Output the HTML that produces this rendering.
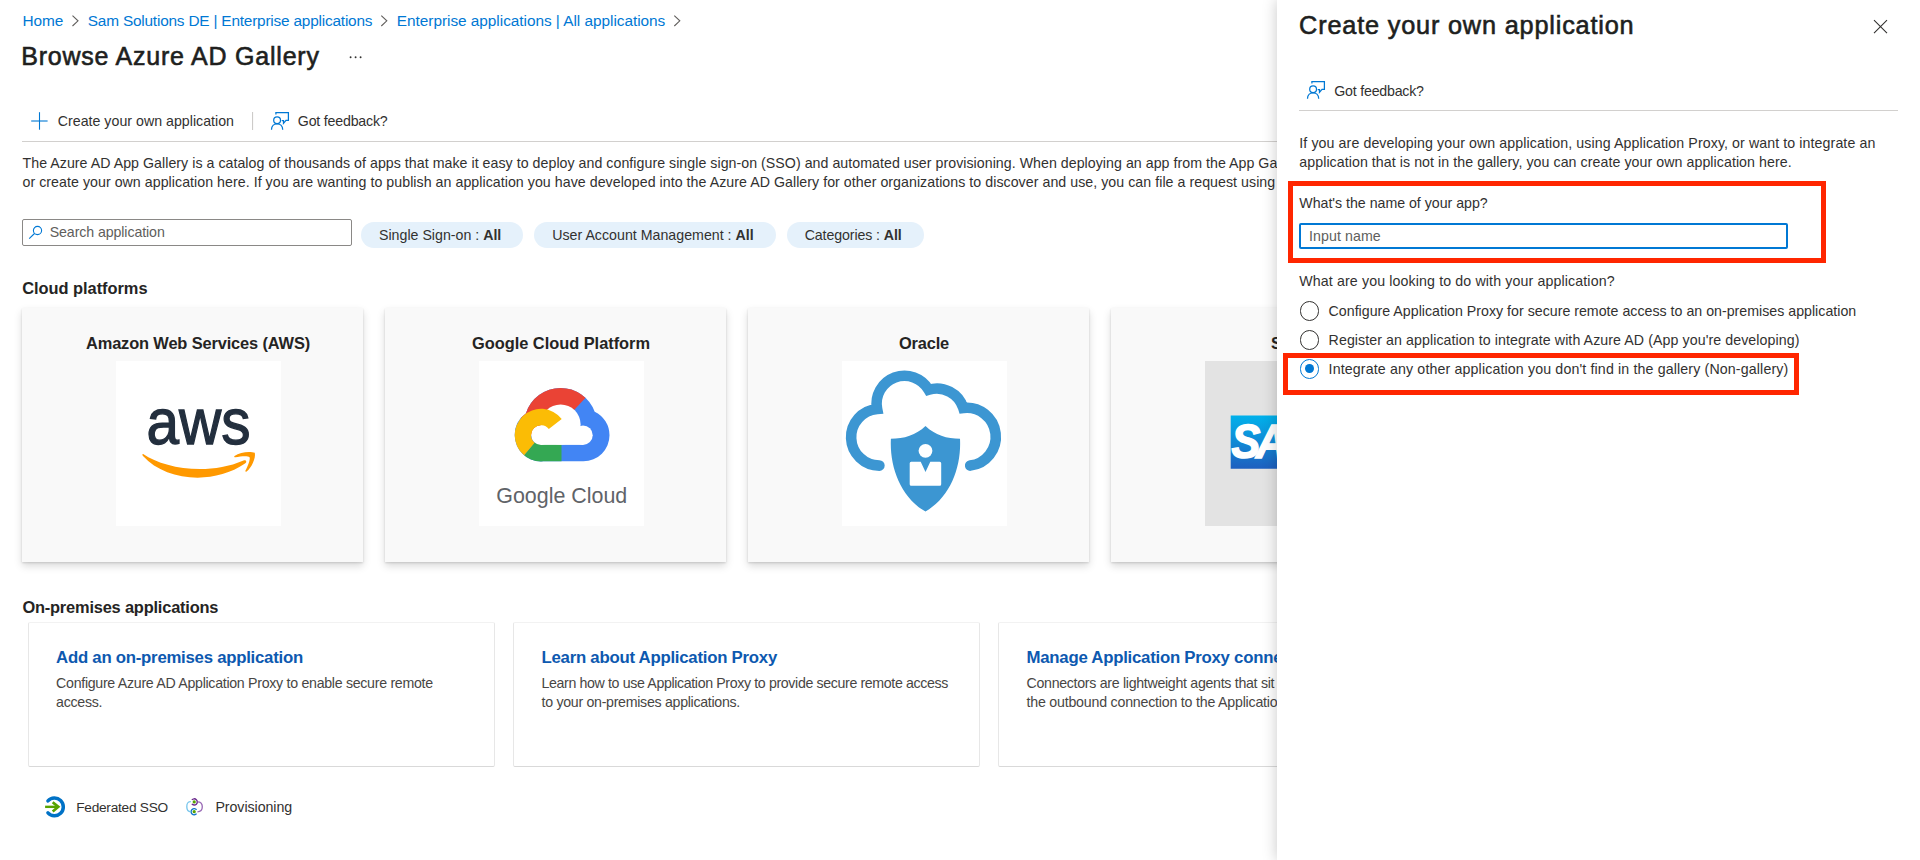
<!DOCTYPE html>
<html lang="en">
<head>
<meta charset="utf-8">
<title>Browse Azure AD Gallery</title>
<style>
html,body{margin:0;padding:0;}
body{width:1920px;height:860px;overflow:hidden;background:#fff;position:relative;font-family:"Liberation Sans",sans-serif;color:#323130;}
.t{position:absolute;white-space:nowrap;line-height:40px;height:40px;font-family:"Liberation Sans",sans-serif;}
.t b{font-weight:700;}
.abs{position:absolute;}
#main{position:absolute;left:0;top:0;width:1277px;height:860px;overflow:hidden;}
#panel{position:absolute;left:1277px;top:0;width:643px;height:860px;background:#fff;box-shadow:0 0 14px rgba(0,0,0,.22);}
#panel .t,#panel .abs{margin-left:-1277px;}
.hr{position:absolute;height:1px;background:#d2d0ce;}
.pill{position:absolute;height:26px;border-radius:13px;background:#e5f1fb;}
.card{position:absolute;top:308px;width:341px;height:254px;background:#f9f9f9;box-shadow:0 3.5px 7.9px rgba(0,0,0,.15),0 .7px 2px rgba(0,0,0,.13);}
.tile{position:absolute;left:94px;top:53px;width:165px;height:165px;background:#fff;overflow:hidden;}
.ocard{position:absolute;top:622px;width:465px;height:143px;background:#fff;border:1px solid #e7e7e7;border-top-color:#f2f2f2;border-bottom-color:#d9d9d9;border-radius:2px;}
.red{position:absolute;border:5.3px solid #ff2600;box-sizing:border-box;}
.radio{position:absolute;width:17.5px;height:17.5px;border:1px solid #323130;border-radius:50%;background:#fff;}
</style>
</head>
<body>
<div id="main">
<!-- breadcrumb chevrons -->
<svg class="abs" style="left:0;top:0" width="700" height="40" fill="none" stroke="#605e5c" stroke-width="1.1">
<path d="M72.5 15.6 L78 20.8 L72.5 26"/>
<path d="M381.3 15.6 L386.8 20.8 L381.3 26"/>
<path d="M674.3 15.6 L679.8 20.8 L674.3 26"/>
</svg>
<!-- ellipsis -->
<svg class="abs" style="left:345px;top:50px" width="24" height="14"><g fill="#323130"><circle cx="5.6" cy="7.3" r="0.95"/><circle cx="10.6" cy="7.3" r="0.95"/><circle cx="15.6" cy="7.3" r="0.95"/></g></svg>
<!-- toolbar icons -->
<svg class="abs" style="left:28px;top:108px" width="270" height="26" fill="none" stroke="#0078d4">
<path d="M11.5 4.2 V21.7" stroke-width="1.1"/>
<path d="M3.2 13 H19.6" stroke-width="1.1"/>
<path d="M224.6 4 V22" stroke="#c8c6c4" stroke-width="1"/>
<g stroke-width="1.25" transform="translate(243,4)">
<path d="M4.9 2.6 V0.6 H17.4 V8.3 H15 L12.5 11.3 V8.5 H10.7"/>
<circle cx="6.1" cy="8.2" r="3.4"/>
<path d="M0.5 17.8 C0.5 9.8, 11.7 9.8, 11.7 17.8"/>
</g>
</svg>
<div class="hr" style="left:22px;top:141px;width:1300px"></div>
<!-- search -->
<div class="abs" style="left:22px;top:219px;width:328px;height:25px;border:1px solid #8a8886;border-radius:2px;background:#fff"></div>
<svg class="abs" style="left:26px;top:222px" width="20" height="20" fill="none" stroke="#0078d4" stroke-width="1.1"><circle cx="11.5" cy="8.5" r="4.1"/><path d="M8.5 11.5 L3.2 16.7"/></svg>
<!-- pills -->
<div class="pill" style="left:361px;top:222px;width:162px"></div>
<div class="pill" style="left:534px;top:222px;width:242px"></div>
<div class="pill" style="left:787px;top:222px;width:137px"></div>
<!-- cloud cards -->
<div class="card" style="left:22px"><div class="tile">
<svg width="165" height="165" viewBox="0 0 165 165">
<text x="30.6" y="83.2" font-family="Liberation Sans, sans-serif" font-size="64" fill="#232f3e" stroke="#232f3e" stroke-width="1.3" textLength="104" lengthAdjust="spacingAndGlyphs">aws</text>
<path fill="#ff9900" d="M27.2 93 C48 107.5, 92 115, 127.5 99.5 C130 98.5, 131.5 101, 129 102.6 C98 124, 50 120.5, 27 95 C26 93.6, 26.4 92.6, 27.2 93 Z"/>
<path fill="#ff9900" d="M118.5 95 C124 91, 134 90, 138.8 91.8 C140 97, 135.5 107, 130.6 110.6 C129.6 111.2, 129 110.4, 129.5 109.6 C132 104.5, 134.4 98.5, 133.6 96.2 C131.5 94.6, 124.5 95.4, 119.4 96.3 C118.3 96.4, 117.8 95.6, 118.5 95 Z"/>
</svg></div></div>
<div class="card" style="left:385px"><div class="tile">
<svg width="165" height="165" viewBox="0 0 165 165">
<defs><clipPath id="gco"><circle cx="62.0" cy="74.1" r="26.3"/><circle cx="81.6" cy="63.4" r="36.4"/><circle cx="104.4" cy="74.2" r="26.1"/><rect x="62.0" y="74" width="42.4" height="26.3"/></clipPath></defs>
<g clip-path="url(#gco)">
<rect x="0" y="0" width="165" height="165" fill="#4285f4"/>
<path fill="#ea4335" d="M81.6 63.4 L108.88 34.15 A40 40 0 0 0 44.01 77.08 Z"/>
<path fill="#34a853" d="M62.0 74.1 L41.43 98.61 L41.43 110 L82.5 110 L82.5 74.1 Z"/>
</g>
<g fill="#fff"><circle cx="62.0" cy="74.1" r="9.9"/><circle cx="81.6" cy="63.4" r="20"/><circle cx="104" cy="74.2" r="9.7"/><rect x="62.0" y="70" width="42" height="13.9"/></g>
<path fill="#fbbc05" d="M45.09 94.25 A26.3 26.3 0 1 1 82.72 57.91 L69.80 68.00 A9.9 9.9 0 1 0 55.64 81.68 Z"/>
<text x="17.3" y="141.8" font-family="Liberation Sans, sans-serif" font-size="22" fill="#5f6368" textLength="131" lengthAdjust="spacingAndGlyphs">Google Cloud</text>
</svg></div></div>
<div class="card" style="left:748px"><div class="tile">
<svg width="165" height="165" viewBox="0 0 165 165">
<path fill="none" stroke="#3c96d2" stroke-width="10.6" stroke-linecap="round" stroke-linejoin="miter" d="M37.4 104.6 A28.35 28.35 0 0 1 35.1 48 A27.9 27.9 0 0 1 86.7 28.8 A27.8 27.8 0 0 1 121.3 47 A29.0 29.0 0 1 1 128.2 104.6"/>
<path fill="#3c96d2" d="M83.5 64.9 C74 74, 62 77.7, 48.9 77.7 C47.5 105, 58 136, 83.5 150.6 C109 136, 119.5 105, 118 77.7 C105 77.7, 93 74, 83.5 64.9 Z"/>
<circle cx="83.5" cy="89.8" r="6.9" fill="#fff"/>
<path fill="#fff" d="M69.2 100.7 H78.7 L83.5 110.9 L88.3 100.7 H97.7 Q99.2 100.7 99.2 102.2 V123.2 Q99.2 124.7 97.7 124.7 H69.2 Q67.7 124.7 67.7 123.2 V102.2 Q67.7 100.7 69.2 100.7 Z"/>
</svg></div></div>
<div class="card" style="left:1111px"><div class="tile" style="background:#e3e3e3">
<svg width="165" height="165" viewBox="0 0 165 165">
<defs><linearGradient id="sapg" x1="0" y1="0" x2="0" y2="1"><stop offset="0" stop-color="#00b1eb"/><stop offset="0.25" stop-color="#0a9ee0"/><stop offset="1" stop-color="#1e5fbf"/></linearGradient></defs>
<path d="M25.7 54.6 H133 L80 107.7 H25.7 Z" fill="url(#sapg)"/>
<g transform="translate(26.6 0) scale(0.88 1)"><text x="0" y="97.5" font-family="Liberation Sans, sans-serif" font-size="49" font-weight="700" font-style="italic" fill="#fff" stroke="#fff" stroke-width="1.6" letter-spacing="-5">SAP</text></g>
</svg></div></div>
<!-- on-prem cards -->
<div class="ocard" style="left:28px"></div>
<div class="ocard" style="left:513px"></div>
<div class="ocard" style="left:998px"></div>
<!-- legend icons -->
<svg class="abs" style="left:40px;top:792px" width="170" height="30" fill="none">
<path d="M7.93 8.92 A8.85 8.85 0 1 1 7.93 20.88" stroke="#0072c6" stroke-width="3.5" stroke-linecap="round"/>
<path d="M5.1 14.85 H17.2" stroke="#57a300" stroke-width="2.4"/>
<path d="M12.7 10.2 L18.3 14.85 L12.7 19.5" stroke="#57a300" stroke-width="2.7"/>
<g stroke-width="1.35">
<path d="M151.83 7.91 A3.1 3.1 0 1 1 151.83 11.89" stroke="#6b2a8c"/>
<path d="M156.57 17.71 A3.1 3.1 0 1 0 156.57 21.69" stroke="#0f74c9"/>
<path d="M150.9 9.6 C147 9.6, 146.8 12, 146.8 14.8 C146.8 17.5, 147.5 19.7, 150.8 19.7" stroke="#79c6ec"/>
<path d="M157.6 9.8 C161.5 9.8, 162.3 12, 162.3 14.8 C162.3 17.5, 161.5 19.8, 157.4 19.8" stroke="#9a6bb6"/>
</g>
<circle cx="154.2" cy="9.9" r="1.6" fill="#57a300"/><circle cx="154.2" cy="19.7" r="1.6" fill="#57a300"/>
</svg>
<span id="bc1" class="t" style="left:22.50px;top:1px;font-size:15.4px;letter-spacing:-0.0406px;color:#0078d4;">Home</span>
<span id="bc2" class="t" style="left:87.80px;top:1px;font-size:15.4px;letter-spacing:-0.2061px;color:#0078d4;">Sam Solutions DE | Enterprise applications</span>
<span id="bc3" class="t" style="left:396.80px;top:1px;font-size:15.4px;letter-spacing:-0.0376px;color:#0078d4;">Enterprise applications | All applications</span>
<span id="title" class="t" style="left:21.30px;top:36px;font-size:25px;letter-spacing:0.7708px;color:#201f1e;-webkit-text-stroke:0.6px currentColor;">Browse Azure AD Gallery</span>
<span id="tb1" class="t" style="left:57.75px;top:101px;font-size:14.2px;letter-spacing:0.0139px;color:#323130;">Create your own application</span>
<span id="tb2" class="t" style="left:297.80px;top:101px;font-size:14.2px;letter-spacing:-0.1986px;color:#323130;">Got feedback?</span>
<span id="d1" class="t" style="left:22.50px;top:143px;font-size:14.2px;letter-spacing:0.0375px;color:#323130;">The Azure AD App Gallery is a catalog of thousands of apps that make it easy to deploy and configure single sign-on (SSO) and automated user provisioning. When deploying an app from the App Gallery, you leverage prebuilt templates to connect your users more securely to their apps. Browse</span>
<span id="d2" class="t" style="left:22.50px;top:162px;font-size:14.2px;letter-spacing:0.0448px;color:#323130;">or create your own application here. If you are wanting to publish an application you have developed into the Azure AD Gallery for other organizations to discover and use, you can file a request using the process described in this article.</span>
<span id="srch" class="t" style="left:49.70px;top:212px;font-size:14.2px;letter-spacing:-0.0964px;color:#605e5c;">Search application</span>
<span id="p1" class="t" style="left:379.00px;top:215px;font-size:14.2px;letter-spacing:0.0025px;color:#323130;">Single Sign-on : <b>All</b></span>
<span id="p2" class="t" style="left:552.20px;top:215px;font-size:14.2px;letter-spacing:0.0152px;color:#323130;">User Account Management : <b>All</b></span>
<span id="p3" class="t" style="left:804.70px;top:215px;font-size:14.2px;letter-spacing:-0.1049px;color:#323130;">Categories : <b>All</b></span>
<span id="h1" class="t" style="left:22.30px;top:268px;font-size:16.4px;letter-spacing:-0.0315px;color:#252423;font-weight:700;">Cloud platforms</span>
<span id="c1" class="t" style="left:86.00px;top:323px;font-size:16.4px;letter-spacing:-0.1363px;color:#252423;font-weight:700;">Amazon Web Services (AWS)</span>
<span id="c2" class="t" style="left:472.00px;top:323px;font-size:16.4px;letter-spacing:-0.0231px;color:#252423;font-weight:700;">Google Cloud Platform</span>
<span id="c3" class="t" style="left:899.00px;top:323px;font-size:16.4px;letter-spacing:-0.1719px;color:#252423;font-weight:700;">Oracle</span>
<span id="c4" class="t" style="left:1271.00px;top:323px;font-size:16.4px;letter-spacing:-0.5677px;color:#252423;font-weight:700;">SAP</span>
<span id="h2" class="t" style="left:22.40px;top:587px;font-size:16.4px;letter-spacing:-0.1871px;color:#252423;font-weight:700;">On-premises applications</span>
<span id="o1t" class="t" style="left:56.10px;top:638px;font-size:16.8px;letter-spacing:-0.2588px;color:#0d59b0;font-weight:700;">Add an on-premises application</span>
<span id="o1a" class="t" style="left:56.10px;top:663px;font-size:14.2px;letter-spacing:-0.2938px;color:#484644;">Configure Azure AD Application Proxy to enable secure remote</span>
<span id="o1b" class="t" style="left:56.10px;top:682px;font-size:14.2px;letter-spacing:-0.2938px;color:#484644;">access.</span>
<span id="o2t" class="t" style="left:541.50px;top:638px;font-size:16.8px;letter-spacing:-0.2500px;color:#0d59b0;font-weight:700;">Learn about Application Proxy</span>
<span id="o2a" class="t" style="left:541.50px;top:663px;font-size:14.2px;letter-spacing:-0.3651px;color:#484644;">Learn how to use Application Proxy to provide secure remote access</span>
<span id="o2b" class="t" style="left:541.50px;top:682px;font-size:14.2px;letter-spacing:-0.2936px;color:#484644;">to your on-premises applications.</span>
<span id="o3t" class="t" style="left:1026.50px;top:638px;font-size:16.8px;letter-spacing:-0.2500px;color:#0d59b0;font-weight:700;">Manage Application Proxy connectors</span>
<span id="o3a" class="t" style="left:1026.50px;top:663px;font-size:14.2px;letter-spacing:-0.2992px;color:#484644;">Connectors are lightweight agents that sit on-premises and facilitate</span>
<span id="o3b" class="t" style="left:1026.50px;top:682px;font-size:14.2px;letter-spacing:-0.2085px;color:#484644;">the outbound connection to the Application Proxy service.</span>
<span id="l1" class="t" style="left:76.20px;top:788px;font-size:13.7px;letter-spacing:-0.2546px;color:#323130;">Federated SSO</span>
<span id="l2" class="t" style="left:215.40px;top:787px;font-size:14.2px;letter-spacing:-0.0414px;color:#323130;">Provisioning</span>
</div>
<div id="panel">
<svg class="abs" style="left:1870px;top:16px" width="22" height="22" stroke="#323130" stroke-width="1.1" fill="none"><path d="M4 4.2 L17 17.2 M17 4.2 L4 17.2"/></svg>
<svg class="abs" style="left:1306px;top:77px" width="24" height="26" fill="none" stroke="#0078d4" stroke-width="1.25">
<g transform="translate(1,4)">
<path d="M4.9 2.6 V0.6 H17.4 V8.3 H15 L12.5 11.3 V8.5 H10.7"/>
<circle cx="6.1" cy="8.2" r="3.4"/>
<path d="M0.5 17.8 C0.5 9.8, 11.7 9.8, 11.7 17.8"/>
</g></svg>
<div class="hr" style="left:1299px;top:110px;width:599px;margin-left:-1277px"></div>
<div class="red abs" style="left:1287.85px;top:180.7px;width:538.15px;height:82.8px"></div>
<div class="abs" style="left:1298.5px;top:223px;width:485px;height:22px;border:2px solid #0078d4;border-radius:2px"></div>
<div class="radio abs" style="left:1299.9px;top:301.2px"></div>
<div class="radio abs" style="left:1299.9px;top:330px"></div>
<div class="radio abs" style="left:1299.9px;top:359px;border-color:#0078d4"></div>
<div class="abs" style="left:1305.25px;top:364.3px;width:8.8px;height:8.8px;border-radius:50%;background:#0078d4"></div>
<div class="red abs" style="left:1282.9px;top:352.5px;width:516.4px;height:42.3px"></div>
<span id="pt" class="t" style="left:1299.10px;top:5px;font-size:25.3px;letter-spacing:0.8076px;color:#201f1e;-webkit-text-stroke:0.6px currentColor;">Create your own application</span>
<span id="pf" class="t" style="left:1334.30px;top:71px;font-size:14.2px;letter-spacing:-0.2139px;color:#323130;">Got feedback?</span>
<span id="pd1" class="t" style="left:1299.30px;top:123px;font-size:14.2px;letter-spacing:0.0925px;color:#323130;">If you are developing your own application, using Application Proxy, or want to integrate an</span>
<span id="pd2" class="t" style="left:1299.30px;top:142px;font-size:14.2px;letter-spacing:0.0649px;color:#323130;">application that is not in the gallery, you can create your own application here.</span>
<span id="pl1" class="t" style="left:1299.30px;top:183px;font-size:14.2px;letter-spacing:-0.0158px;color:#323130;">What's the name of your app?</span>
<span id="pin" class="t" style="left:1309.00px;top:216px;font-size:14.2px;letter-spacing:0.0800px;color:#605e5c;">Input name</span>
<span id="pl2" class="t" style="left:1299.30px;top:261px;font-size:14.2px;letter-spacing:0.1274px;color:#323130;">What are you looking to do with your application?</span>
<span id="r1" class="t" style="left:1328.60px;top:291px;font-size:14.2px;letter-spacing:0.0100px;color:#323130;">Configure Application Proxy for secure remote access to an on-premises application</span>
<span id="r2" class="t" style="left:1328.60px;top:320px;font-size:14.2px;letter-spacing:0.0814px;color:#323130;">Register an application to integrate with Azure AD (App you're developing)</span>
<span id="r3" class="t" style="left:1328.60px;top:349px;font-size:14.2px;letter-spacing:0.1428px;color:#323130;">Integrate any other application you don't find in the gallery (Non-gallery)</span>
</div>
</body>
</html>
